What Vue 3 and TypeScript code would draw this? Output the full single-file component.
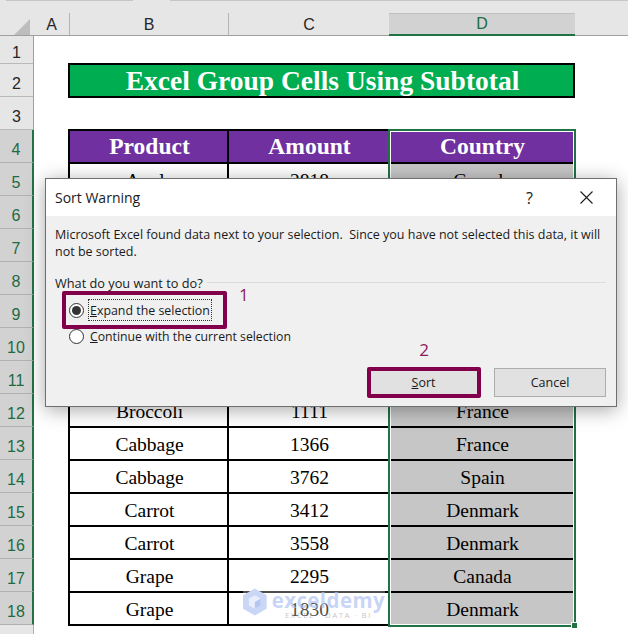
<script setup lang="ts">
interface Row { n: number; product: string; amount: string; country: string }
const rows: Row[] = [
  { n: 5, product: 'Apple', amount: '2818', country: 'Canada' },
  { n: 6, product: '', amount: '', country: '' },
  { n: 7, product: '', amount: '', country: '' },
  { n: 8, product: '', amount: '', country: '' },
  { n: 9, product: '', amount: '', country: '' },
  { n: 10, product: '', amount: '', country: '' },
  { n: 11, product: '', amount: '', country: '' },
  { n: 12, product: 'Broccoli', amount: '1111', country: 'France' },
  { n: 13, product: 'Cabbage', amount: '1366', country: 'France' },
  { n: 14, product: 'Cabbage', amount: '3762', country: 'Spain' },
  { n: 15, product: 'Carrot', amount: '3412', country: 'Denmark' },
  { n: 16, product: 'Carrot', amount: '3558', country: 'Denmark' },
  { n: 17, product: 'Grape', amount: '2295', country: 'Canada' },
  { n: 18, product: 'Grape', amount: '1830', country: 'Denmark' },
]
const rowNumbers = Array.from({ length: 18 }, (_, i) => i + 1)
const message = 'Microsoft Excel found data next to your selection.  Since you have not selected this data, it will'
</script>

<template>
  <div class="app">
    <div class="strip"><i class="s1"></i><i class="s2"></i></div>
    <div class="colhead">
      <div class="corner"><svg width="16" height="16" viewBox="0 0 16 16"><path d="M16 0V16H0Z" fill="#bdbdbd" /></svg></div>
      <div class="col a">A</div>
      <div class="col b">B</div>
      <div class="col c">C</div>
      <div class="col d">D</div>
    </div>
    <div class="main">
      <div class="rowhead">
        <div v-for="n in rowNumbers" :key="n" class="rh" :class="{ first: n === 1, sel: n >= 4 }">{{ n }}</div>
        <div class="rh-rest"></div>
      </div>
      <div class="sheet">
        <div class="title">Excel Group Cells Using Subtotal</div>
        <div class="table">
          <div class="th">Product</div>
          <div class="th">Amount</div>
          <div class="th last">Country</div>
          <template v-for="r in rows" :key="r.n">
            <div class="td">{{ r.product }}</div>
            <div class="td">{{ r.amount }}</div>
            <div class="td last">{{ r.country }}</div>
          </template>
          <div class="selection"><i class="handle"></i></div>
        </div>
      </div>
    </div>

    <div class="watermark">
      <svg width="28" height="32" viewBox="0 0 28 32">
        <path d="M14 0 28 8V24L14 32 0 24V8Z" fill="#c9d6f5" />
        <path d="M14 8 21 12V20L14 24 7 20V12Z" fill="#e8eefb" />
        <path d="M14 16 21 12V20L14 24Z" fill="#b6c7ef" />
      </svg>
      <div class="wm-text">
        <div class="wm-name">exceldemy</div>
        <div class="wm-sub">EXCEL · DATA · BI</div>
      </div>
    </div>

    <div class="dialog">
      <div class="dlg-title">
        <span class="dlg-name">Sort Warning</span>
        <span class="help">?</span>
        <svg class="close" width="13" height="13" viewBox="0 0 13 13"><path d="M.5.5 12.5 12.5M12.5.5.5 12.5" stroke="#1a1a1a" stroke-width="1.1" fill="none" /></svg>
      </div>
      <div class="dlg-body">
        <p class="msg">{{ message }}<br />not be sorted.</p>
        <div class="legend"><span>What do you want to do?</span><i></i></div>
        <div class="options">
          <div class="opt focus-row">
            <span class="radio on"></span>
            <span class="focus"><u>E</u>xpand the selection</span>
            <span class="mark one">1</span>
          </div>
          <div class="opt">
            <span class="radio"></span>
            <span class="plain"><u>C</u>ontinue with the current selection</span>
          </div>
        </div>
        <div class="buttons">
          <div class="btn primary"><u>S</u>ort<span class="mark two">2</span></div>
          <div class="btn">Cancel</div>
        </div>
      </div>
    </div>
  </div>
</template>

<style>
html, body { margin: 0; background: #fff; }
</style>

<style scoped>
.app {
  position: relative;
  width: 628px;
  height: 634px;
  overflow: hidden;
  background: #fff;
  font-family: "Open Sans", "Noto Sans", sans-serif;
}
.strip {
  height: 13px;
  background: #e6e6e6;
  display: flex;
  align-items: flex-start;
  gap: 37px;
  padding-left: 6px;
}
.strip i { display: block; height: 1px; background: #c6c6c6; }
.s1 { width: 127px; }
.s2 { flex: 1; }
.colhead {
  display: flex;
  height: 23px;
  background: #e6e6e6;
  box-sizing: border-box;
  border-bottom: 1px solid #9f9f9f;
}
.corner { width: 34px; box-sizing: border-box; padding: 5px 0 0 14px; }
.col {
  box-sizing: border-box;
  border-right: 1px solid #b4b4b4;
  text-align: center;
  font: 16px/23px "Liberation Sans", sans-serif;
  color: #262626;
}
.a { width: 36px; }
.b { width: 159px; }
.c { width: 160px; border-right: 0; }
.d {
  width: 186px;
  height: 23px;
  background: #d2d2d2;
  border-right: 0;
  border-bottom: 2px solid #217346;
  color: #1d6b42;
  line-height: 22px;
  box-shadow: inset 0 1px 0 #c0c0c0;
}
.main { display: flex; }
.rowhead { width: 34px; flex: none; }
.rh {
  box-sizing: border-box;
  height: 33px;
  background: #e6e6e6;
  border-bottom: 1px solid #b9b9b9;
  border-right: 1px solid #9f9f9f;
  text-align: center;
  font: 16px/40px "Liberation Sans", sans-serif;
  color: #262626;
}
.rh.first { height: 28px; line-height: 33px; }
.rh.sel {
  background: #d2d2d2;
  border-right: 2px solid #217346;
  color: #1d6b42;
  border-bottom-color: #b0b0b0;
}
.rh-rest { height: 20px; background: #e6e6e6; border-right: 1px solid #b0b0b0; }
.sheet { padding: 27px 0 0 34px; position: relative; }
.title {
  box-sizing: border-box;
  width: 507px;
  height: 35px;
  border: 2px solid #000;
  background: #00ad50;
  color: #fff;
  text-align: center;
  padding-left: 2px;
  font: bold 27.5px/31px "Liberation Serif", serif;
}
.table {
  position: relative;
  margin-top: 31px;
  display: grid;
  grid-template-columns: 159px 161px 185px;
  grid-auto-rows: 33px;
  width: 507px;
  border-top: 2px solid #000;
  border-left: 2px solid #000;
  box-sizing: border-box;
}
.th, .td {
  box-sizing: border-box;
  border-right: 2px solid #000;
  border-bottom: 2px solid #000;
  padding-left: 2px;
  text-align: center;
  font-family: "Liberation Serif", serif;
}
.th {
  background: #7030a0;
  color: #fff;
  font-weight: 700;
  font-size: 23.5px;
  line-height: 31px;
}
.td { font-size: 19.5px; line-height: 33px; color: #000; }
.td.last { background: #c6c6c6; }
.th.last { background: #7030a0; }
.selection {
  position: absolute;
  right: -1px;
  top: -2px;
  bottom: -1px;
  width: 188px;
  box-sizing: border-box;
  border: 2px solid #217346;
  outline: 1px solid #fff;
  outline-offset: -3px;
}
.handle {
  position: absolute;
  right: -3px;
  bottom: -3px;
  width: 5px;
  height: 5px;
  background: #217346;
  outline: 1px solid #fff;
}
.watermark {
  position: absolute;
  left: 243px;
  top: 586px;
  width: 142px;
  display: flex;
  align-items: flex-start;
  gap: 5px;
  pointer-events: none;
  background: rgba(255, 255, 255, .3);
}
.wm-name {
  font: bold 20.5px/22px "Open Sans", sans-serif;
  color: rgba(175, 195, 242, .7);
  letter-spacing: .4px;
  padding-top: 3px;
}
.wm-sub {
  font: 8px/8px "Open Sans", sans-serif;
  color: rgba(120, 120, 120, .45);
  letter-spacing: 1.4px;
  text-align: center;
}
.dialog {
  position: absolute;
  left: 45px;
  top: 178px;
  width: 572px;
  height: 229px;
  box-sizing: border-box;
  border: 1px solid #6f6f6f;
  background: #f0f0f0;
  box-shadow: 0 3px 18px rgba(0, 0, 0, .35);
  display: flex;
  flex-direction: column;
  font-size: 12.5px;
  color: #1a1a1a;
}
.dlg-title {
  height: 37px;
  flex: none;
  background: #fff;
  display: flex;
  align-items: center;
  padding: 0 23px 0 9px;
}
.dlg-name { flex: 1; font-size: 14px; }
.help { font-size: 16px; margin-right: 47px; }
.dlg-body { flex: 1; display: flex; flex-direction: column; padding: 10px 10px 9px 9px; }
.msg { margin: 0; line-height: 17px; white-space: pre; }
.legend { display: flex; align-items: center; gap: 4px; margin-top: 15px; line-height: 17px; font-size: 12.75px; }
.legend i { flex: 1; height: 1px; background: #dcdcdc; margin-top: -2px; }
.options { margin: 5px 0 0 14px; }
.opt { display: flex; align-items: center; gap: 5px; height: 26px; position: relative; }
.radio {
  width: 15px;
  height: 15px;
  box-sizing: border-box;
  border: 1px solid #333;
  border-radius: 50%;
  background: #fff;
  flex: none;
  position: relative;
}
.radio.on::after {
  content: "";
  position: absolute;
  inset: 2px;
  border-radius: 50%;
  background: #333;
}
.focus { outline: 1px dotted #333; line-height: 19px; padding: 1px 1px 0; font-size: 12.4px; }
.plain { padding-left: 1px; font-size: 12.25px; }
.focus-row::before {
  content: "";
  position: absolute;
  left: -7px;
  top: -6px;
  width: 165px;
  height: 38px;
  box-sizing: border-box;
  border: 4px solid #82004b;
  border-radius: 2px;
}
.mark { position: absolute; color: #8a1a58; font-size: 17px; line-height: 20px; }
.one { left: 170px; top: -12px; }
.two { left: 50%; top: -29px; transform: translateX(-50%); }
.buttons { margin-top: auto; display: flex; justify-content: flex-end; gap: 14px; }
.btn {
  position: relative;
  width: 112px;
  height: 29px;
  box-sizing: border-box;
  border: 1px solid #adadad;
  background: #e1e1e1;
  text-align: center;
  line-height: 27px;
}
.btn.primary { padding-right: 1px; }
.btn.primary::before {
  content: "";
  position: absolute;
  inset: -2px;
  border: 4px solid #82004b;
  border-radius: 2px;
}
</style>
